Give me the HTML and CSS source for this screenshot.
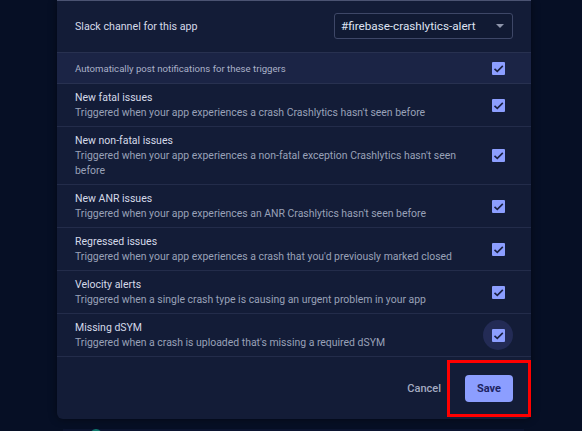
FILE: index.html
```html
<!DOCTYPE html>
<html lang="en">
<head>
    <meta charset="UTF-8">
    <meta name="viewport" content="width=device-width, initial-scale=1.0">
    <title>Slack integration</title>
    <link rel="stylesheet" href="styles.css">
</head>
<body>
    <div class="dialog">
        <!-- Channel picker -->
        <div class="channel-row">
            <span class="label">Slack channel for this app</span>
            <div class="select">
                <span>#firebase-crashlytics-alert</span>
                <span class="arrow"></span>
            </div>
        </div>

        <!-- Trigger list -->
        <div class="trigger-head">
            <span>Automatically post notifications for these triggers</span>
            <span class="check-cell"><span class="checkbox"><svg viewBox="0 0 13 13"><path d="M2.5 6.8 L5.3 9.4 L10.8 3.9"/></svg></span></span>
        </div>

        <div class="trigger">
            <div class="trigger-text">
                <div class="title">New fatal issues</div>
                <div class="desc">Triggered when your app experiences a crash Crashlytics hasn't seen before</div>
            </div>
            <span class="check-cell"><span class="checkbox"><svg viewBox="0 0 13 13"><path d="M2.5 6.8 L5.3 9.4 L10.8 3.9"/></svg></span></span>
        </div>
        <div class="trigger">
            <div class="trigger-text">
                <div class="title">New non-fatal issues</div>
                <div class="desc">Triggered when your app experiences a non-fatal exception Crashlytics hasn't seen before</div>
            </div>
            <span class="check-cell"><span class="checkbox"><svg viewBox="0 0 13 13"><path d="M2.5 6.8 L5.3 9.4 L10.8 3.9"/></svg></span></span>
        </div>
        <div class="trigger">
            <div class="trigger-text">
                <div class="title">New ANR issues</div>
                <div class="desc">Triggered when your app experiences an ANR Crashlytics hasn't seen before</div>
            </div>
            <span class="check-cell"><span class="checkbox"><svg viewBox="0 0 13 13"><path d="M2.5 6.8 L5.3 9.4 L10.8 3.9"/></svg></span></span>
        </div>
        <div class="trigger">
            <div class="trigger-text">
                <div class="title">Regressed issues</div>
                <div class="desc">Triggered when your app experiences a crash that you'd previously marked closed</div>
            </div>
            <span class="check-cell"><span class="checkbox"><svg viewBox="0 0 13 13"><path d="M2.5 6.8 L5.3 9.4 L10.8 3.9"/></svg></span></span>
        </div>
        <div class="trigger">
            <div class="trigger-text">
                <div class="title">Velocity alerts</div>
                <div class="desc">Triggered when a single crash type is causing an urgent problem in your app</div>
            </div>
            <span class="check-cell"><span class="checkbox"><svg viewBox="0 0 13 13"><path d="M2.5 6.8 L5.3 9.4 L10.8 3.9"/></svg></span></span>
        </div>
        <div class="trigger">
            <div class="trigger-text">
                <div class="title">Missing dSYM</div>
                <div class="desc">Triggered when a crash is uploaded that's missing a required dSYM</div>
            </div>
            <!-- focused checkbox shows the halo -->
            <span class="check-cell focused"><span class="checkbox"><svg viewBox="0 0 13 13"><path d="M2.5 6.8 L5.3 9.4 L10.8 3.9"/></svg></span></span>
        </div>

        <div class="actions">
            <button class="btn-cancel">Cancel</button>
            <div class="highlight">
                <button class="btn-save">Save</button>
            </div>
        </div>
    </div>

    <!-- page behind the dialog -->
    <div class="page-below">
        <span class="avatar"></span>
    </div>
</body>
</html>
```

FILE: styles.css
```css
body {
    margin: 0;
    padding: 0;
    background-color: #060f25;
    font-family: Roboto, "Noto Sans", sans-serif;
    height: 431px;
    overflow: hidden;
}
.dialog {
    width: 474px;
    margin-left: 57px;
    background-color: #131c37;
    border-top: 1px solid #4b5372;
    border-radius: 0 0 6px 6px;
    box-shadow: 0 0 8px rgba(0, 0, 0, 0.45);
    position: relative;
    z-index: 1;
}
.channel-row {
    display: flex;
    justify-content: space-between;
    align-items: center;
    padding: 12px 18px 13px 18px;
    border-bottom: 1px solid #283150;
}
.label {
    font-size: 10.7px;
    color: #d5dae9;
}
.select {
    width: 165px;
    height: 24px;
    padding: 0 6px;
    display: flex;
    align-items: center;
    justify-content: space-between;
    border: 1px solid #3e4767;
    border-radius: 3px;
    background-color: #111a33;
    font-size: 11.7px;
    color: #dfe3f2;
}
.arrow {
    width: 0;
    height: 0;
    margin-right: 2px;
    border-left: 4px solid transparent;
    border-right: 4px solid transparent;
    border-top: 4px solid #8e95ab;
}
.trigger-head {
    display: flex;
    justify-content: space-between;
    align-items: center;
    height: 30px;
    padding: 0 18px;
    background-color: #1b2445;
    border-bottom: 1px solid #283150;
    font-size: 9.6px;
    color: #aab1c8;
}
.trigger {
    display: flex;
    justify-content: space-between;
    align-items: center;
    padding: 6px 18px;
    border-bottom: 1px solid #232c4a;
}
.trigger-text {
    width: 400px;
}
.title {
    font-size: 10.5px;
    line-height: 15px;
    color: #d5dae9;
}
.desc {
    font-size: 10.45px;
    line-height: 15px;
    color: #99a1b8;
}
.check-cell {
    width: 30px;
    height: 30px;
    flex-shrink: 0;
    display: flex;
    align-items: center;
    justify-content: center;
    border-radius: 50%;
}
.check-cell.focused {
    background-color: #232b55;
}
.checkbox {
    width: 13px;
    height: 13px;
    background-color: #8c9eff;
    border-radius: 1px;
}
.checkbox svg {
    display: block;
    width: 13px;
    height: 13px;
    fill: none;
    stroke: #1a2142;
    stroke-width: 1.6;
}
/* Footer buttons */
.actions {
    display: flex;
    justify-content: flex-end;
    align-items: center;
    padding: 3px 0 2px 0;
}
.btn-cancel {
    background: none;
    border: none;
    padding: 0 6px 0 8px;
    font-family: inherit;
    font-size: 11px;
    font-weight: 500;
    color: #a4abc1;
}
.highlight {
    border: 3px solid #f00;
    padding: 12px 15px;
}
.btn-save {
    display: block;
    width: 48px;
    height: 27px;
    border: none;
    border-radius: 4px;
    background-color: #8c9eff;
    font-family: inherit;
    font-size: 11px;
    font-weight: 700;
    color: #1d2463;
}
.page-below {
    margin: -10px 58px 0 63px;
    height: 40px;
    background-color: #0b1430;
    position: relative;
}
.avatar {
    display: block;
    width: 12px;
    height: 12px;
    margin-left: 27px;
    margin-top: 20px;
    border-radius: 50%;
    background-color: #0f7a6e;
}
```
